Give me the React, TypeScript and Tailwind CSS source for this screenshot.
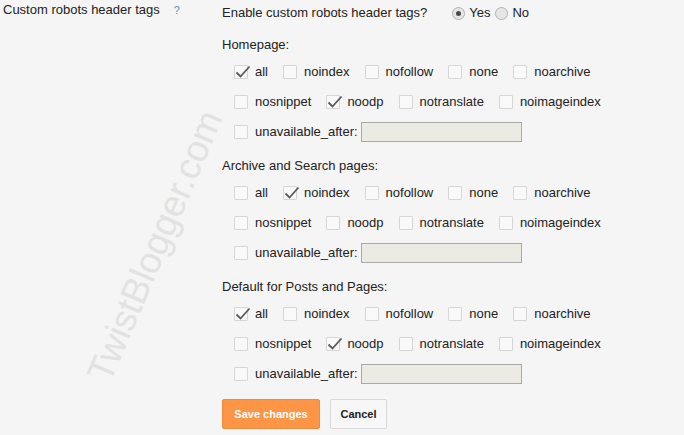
import React from 'react';

type Opt = { label: string; checked?: boolean };

const Checkbox = ({ checked }: { checked?: boolean }) => (
  <span className="relative w-[14px] h-[14px] shrink-0 rounded-[1px] border border-[#d6d6d6] bg-[#f9f9f9]">
    {checked && (
      <svg className="absolute left-[-1px] top-[-1px] overflow-visible" width="16" height="16" viewBox="0 0 16 16">
        <path d="M2.5 7.5 L6.5 11.5 L15.5 1.5" fill="none" stroke="#5a5a5a" strokeWidth="1.8" />
      </svg>
    )}
  </span>
);

const Item = ({ label, checked }: Opt) => (
  <label className="flex items-center mr-[15px]">
    <Checkbox checked={checked} />
    <span className="ml-[7px]">{label}</span>
  </label>
);

const Radio = ({ checked }: { checked?: boolean }) => (
  <span className="flex items-center justify-center w-[13px] h-[13px] rounded-full border border-[#b1b1b1] bg-[#e6e6e6]">
    {checked && <span className="w-[5px] h-[5px] rounded-full bg-[#4a4a4a]" />}
  </span>
);

interface SectionProps {
  title: string;
  row1: Opt[];
  row2: Opt[];
  first?: boolean;
}

const Section = ({ title, row1, row2, first }: SectionProps) => (
  <div className={first ? 'mt-[16px]' : 'mt-[11px]'}>
    <div className="h-[16px] leading-[16px]">{title}</div>
    <div className="mt-[4px] pl-[12px]">
      <div className="h-[30px] flex items-center">
        {row1.map((o) => <Item key={o.label} {...o} />)}
      </div>
      <div className="h-[30px] flex items-center">
        {row2.map((o) => <Item key={o.label} {...o} />)}
      </div>
      <div className="h-[30px] flex items-center">
        <Checkbox />
        <span className="ml-[7px]">unavailable_after:</span>
        <span className="ml-[3px] w-[161px] h-[20px] border border-[#a9a9a9] bg-[#ebebe4]" />
      </div>
    </div>
  </div>
);

const row1 = (all: boolean, noindex: boolean): Opt[] => [
  { label: 'all', checked: all },
  { label: 'noindex', checked: noindex },
  { label: 'nofollow' },
  { label: 'none' },
  { label: 'noarchive' },
];

const row2 = (noodp: boolean): Opt[] => [
  { label: 'nosnippet' },
  { label: 'noodp', checked: noodp },
  { label: 'notranslate' },
  { label: 'noimageindex' },
];

export default function App() {
  return (
    <div className="relative w-[684px] h-[435px] overflow-hidden bg-[#f5f5f5] text-[13px] text-[#222] font-['Liberation_Sans',Arial,sans-serif]">
      <div
        className="pointer-events-none absolute left-[155px] top-[246px] -translate-x-1/2 -translate-y-1/2 -rotate-[67deg] whitespace-nowrap text-[37px] leading-none text-[#e2e2e2]"
      >
        TwistBlogger.com
      </div>

      <div className="relative flex">
        <div className="w-[222px] shrink-0 flex pl-[3px] pt-[2px] h-[16px] leading-[16px]">
          <span>Custom robots header tags</span>
          <span className="ml-[14px] text-[11px] text-[#6a8db8]">?</span>
        </div>

        <div className="pt-[5px]">
          <div className="h-[16px] flex items-center">
            <span>Enable custom robots header tags?</span>
            <span className="ml-[25px]"><Radio checked /></span>
            <span className="ml-[4px]">Yes</span>
            <span className="ml-[5px]"><Radio /></span>
            <span className="ml-[4px]">No</span>
          </div>

          <Section first title="Homepage:" row1={row1(true, false)} row2={row2(true)} />
          <Section title="Archive and Search pages:" row1={row1(false, true)} row2={row2(false)} />
          <Section title="Default for Posts and Pages:" row1={row1(true, false)} row2={row2(true)} />

          <div className="mt-[10px] flex gap-[10px] text-[11px] font-bold">
            <button className="h-[30px] w-[98px] rounded-[2px] border border-[#f08a3c] bg-[#fd9546] text-white">
              Save changes
            </button>
            <button className="h-[30px] w-[57px] rounded-[2px] border border-[#dadada] bg-[#f7f7f7] text-[#222]">
              Cancel
            </button>
          </div>
        </div>
      </div>
    </div>
  );
}
